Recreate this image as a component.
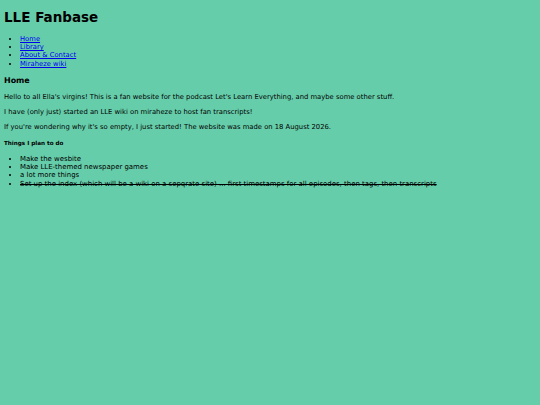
export default function App() {
  return (
    <div
      className="min-h-screen flow-root bg-[#66cdaa] px-[4px] text-[6.8px] leading-[8.15px] text-black"
      style={{ fontFamily: '"DejaVu Sans", Verdana, sans-serif' }}
    >
      <h1 className="my-[9.38px] text-[13.5px] leading-[16.3px] font-bold">LLE Fanbase</h1>
      <ul className="my-[7px] list-disc pl-[16px]">
        <li>
          <a href="#" className="text-[#0000ee] underline">Home</a>
        </li>
        <li>
          <a href="#" className="text-[#0000ee] underline">Library</a>
        </li>
        <li>
          <a href="#" className="text-[#0000ee] underline">About &amp; Contact</a>
        </li>
        <li>
          <a href="#" className="text-[#0000ee] underline">Miraheze wiki</a>
        </li>
      </ul>
      <h3 className="mt-[8px] mb-[7.5px] text-[7.95px] leading-[9.53px] font-bold">Home</h3>
      <p className="my-[7px]">
        Hello to all Ella's virgins! This is a fan website for the podcast Let's Learn Everything, and maybe some other stuff.
      </p>
      <p className="my-[7px]">
        I have (only just) started an LLE wiki on miraheze to host fan transcripts!
      </p>
      <p className="my-[7px]">
        If you're wondering why it's so empty, I just started! The website was made on 18 August 2026.
      </p>
      <h5 className="my-[8.6px] text-[5.65px] leading-[6.76px] font-bold">Things I plan to do</h5>
      <ul className="my-[7px] list-disc pl-[16px] text-[6.95px]">
        <li>Make the wesbite</li>
        <li>Make LLE-themed newspaper games</li>
        <li>a lot more things</li>
        <li className="line-through">
          Set up the index (which will be a wiki on a sepqrate site) ... first timestamps for all episodes, then tags, then transcripts
        </li>
      </ul>
    </div>
  );
}
